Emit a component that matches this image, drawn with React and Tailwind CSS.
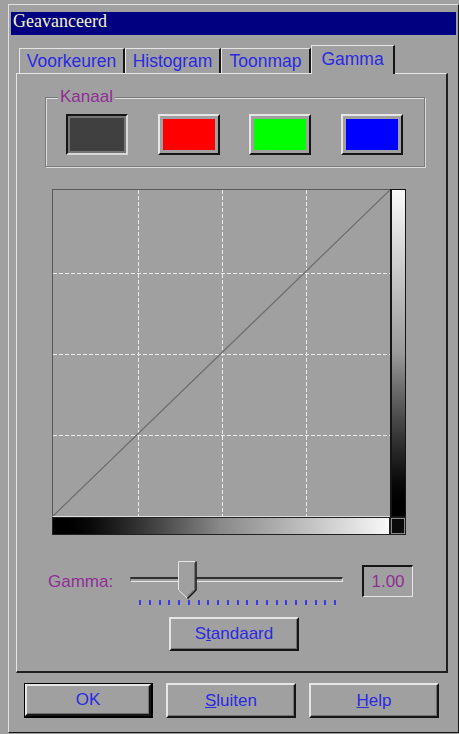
import React from "react";

const TXT_BLUE = "text-[#2a2ae0]";
const TXT_PURPLE = "text-[#8e2f96]";

function RaisedButton({ children, className = "" }) {
  return (
    <div
      className={`flex items-center justify-center border-t-2 border-l-2 border-t-[#e6e6e6] border-l-[#e6e6e6] border-r-2 border-b-2 border-r-[#151515] border-b-[#151515] shadow-[inset_-1px_-1px_0_#707070] ${className}`}
    >
      {children}
    </div>
  );
}

function Tab({ label, width, selected }) {
  if (selected) {
    return (
      <div
        className={`relative z-10 -mb-[1px] h-[29px] ${width} bg-[#a0a0a0] border-l border-t border-[#e6e6e6] border-r-2 border-r-[#151515] flex justify-center ${TXT_BLUE} text-[17.5px] leading-[20px] pt-[3px]`}
      >
        {label}
      </div>
    );
  }
  return (
    <div
      className={`h-[25px] ${width} border-l border-t border-[#e6e6e6] border-r-2 border-r-[#151515] flex justify-center ${TXT_BLUE} text-[17.5px] leading-[20px] pt-[2px]`}
    >
      {label}
    </div>
  );
}

function ColorSwatch({ color, pressed }) {
  if (pressed) {
    return (
      <div className="w-[62px] h-[41px] border-t-2 border-l-2 border-t-[#151515] border-l-[#151515] border-r-2 border-b-2 border-r-[#d8d8d8] border-b-[#d8d8d8] p-[2px] bg-[#767676]">
        <div className="w-full h-full bg-[#404040]" />
      </div>
    );
  }
  return (
    <div className="w-[62px] h-[41px] border-t-2 border-l-2 border-t-[#e6e6e6] border-l-[#e6e6e6] border-r-2 border-b-2 border-r-[#151515] border-b-[#151515] p-[3px] bg-[#a0a0a0]">
      <div className={`w-full h-full ${color}`} />
    </div>
  );
}

function Graph() {
  const vx = [85, 169, 253];
  const hy = [83, 164, 245];
  return (
    <svg width="337" height="326" viewBox="0 0 337 326" className="block">
      {vx.map((x) => (
        <line key={"v" + x} x1={x + 0.5} y1="0" x2={x + 0.5} y2="326" stroke="#ececec" strokeWidth="1" strokeDasharray="4 2" />
      ))}
      {hy.map((y) => (
        <line key={"h" + y} x1="0" y1={y + 0.5} x2="337" y2={y + 0.5} stroke="#ececec" strokeWidth="1" strokeDasharray="4 2" />
      ))}
      <line x1="0" y1="326" x2="337" y2="0" stroke="#6c6c6c" strokeWidth="1.2" />
    </svg>
  );
}

function Thumb() {
  return (
    <svg width="19" height="38" viewBox="0 0 19 38" className="block">
      <polygon points="0.5,0.5 18,0.5 18,29 9.5,37 0.5,29" fill="#a0a0a0" />
      <polyline points="0.5,29 0.5,0.5 17.5,0.5" fill="none" stroke="#e6e6e6" strokeWidth="1" />
      <polyline points="18,0.5 18,29 9.5,37.5" fill="none" stroke="#151515" strokeWidth="1.5" />
      <polyline points="16.5,2 16.5,28.5 9.5,35" fill="none" stroke="#707070" strokeWidth="1" />
      <line x1="1" y1="29.5" x2="9" y2="37" stroke="#e6e6e6" strokeWidth="1" />
    </svg>
  );
}

export default function App() {
  const ticks = Array.from({ length: 21 }, (_, i) => i);
  return (
    <div className="w-[459px] h-[734px] bg-[#a0a0a0] pt-[4px] pl-[8px] overflow-hidden font-['Liberation_Sans',Arial,sans-serif]">
      <div className="w-[451px] h-[729px] border-l border-t border-[#e0e0e0] border-r border-b border-r-[#151515] border-b-[#151515] flex flex-col">
        {/* Title bar */}
        <div className="mt-[7px] ml-[2px] w-[445px] h-[23px] bg-[#000080] pl-[2px] text-[18px] leading-[18px] text-[#f6f6c8] font-['Liberation_Serif','Times_New_Roman',serif]">
          Geavanceerd
        </div>

        {/* Tabs */}
        <div className="mt-[10px] ml-[10px] h-[28px] flex items-end">
          <Tab label="Voorkeuren" width="w-[106px]" />
          <Tab label="Histogram" width="w-[96px]" />
          <Tab label="Toonmap" width="w-[90px]" />
          <Tab label="Gamma" width="w-[84px]" selected />
        </div>

        {/* Panel */}
        <div className="ml-[7px] w-[432px] h-[600px] border-l border-t border-[#e6e6e6] border-r-2 border-b-2 border-r-[#202020] border-b-[#202020] flex flex-col">
          {/* Kanaal group */}
          <div className="relative mt-[23px] ml-[28px] w-[380px] h-[70px] border border-[#7a7a7a] shadow-[inset_1px_1px_0_#dcdcdc,1px_1px_0_#dcdcdc]">
            <div className={`absolute left-[12px] -top-[11px] px-[2px] bg-[#a0a0a0] text-[17px] leading-[20px] ${TXT_PURPLE}`}>
              Kanaal
            </div>
            <div className="pt-[16px] pl-[20px] pr-[21px] flex justify-between">
              <ColorSwatch pressed />
              <ColorSwatch color="bg-[#ff0000]" />
              <ColorSwatch color="bg-[#00ff00]" />
              <ColorSwatch color="bg-[#0000ff]" />
            </div>
          </div>

          {/* Graph block */}
          <div className="mt-[22px] ml-[35px] grid grid-cols-[338px_16px] grid-rows-[328px_18px]">
            <div className="border-t border-l border-[#5a5a5a] border-b border-b-[#dcdcdc]">
              <Graph />
            </div>
            <div className="border border-[#151515] border-l-2 bg-gradient-to-b from-[#fafafa] via-[#9a9a9a] to-[#000000]" />
            <div className="border border-[#202020] bg-gradient-to-r from-[#000000] via-[#8a8a8a] to-[#f8f8f8]" />
            <div className="border border-[#202020] p-[1px] bg-[#8a8a8a]">
              <div className="w-full h-full bg-[#0a0a0a]" />
            </div>
          </div>

          {/* Gamma row */}
          <div className="mt-[26px] ml-[31px] flex items-start">
            <div className={`w-[82px] mt-[11px] text-[17px] leading-[20px] ${TXT_PURPLE}`}>Gamma:</div>
            <div className="w-[213px] flex flex-col">
              <div className="relative h-[38px]">
                <div className="absolute left-0 right-0 top-[16px] h-[5px] border-t-2 border-t-[#303030] border-l border-l-[#707070] border-b border-b-[#e6e6e6] border-r border-r-[#e6e6e6]" />
                <div className="absolute left-[48px] top-0">
                  <Thumb />
                </div>
              </div>
              <div className="mt-[1px] pl-[9px] w-[206px] h-[5px] flex justify-between">
                {ticks.map((t) => (
                  <div key={t} className="w-[2px] h-[5px] bg-[#3a3ae8]" />
                ))}
              </div>
            </div>
            <div className={`ml-[19px] mt-[4px] w-[51px] h-[32px] border-t-2 border-l-2 border-t-[#151515] border-l-[#151515] border-r border-b border-r-[#e6e6e6] border-b-[#e6e6e6] flex items-center justify-center text-[17px] leading-[20px] ${TXT_PURPLE}`}>
              1.00
            </div>
          </div>

          {/* Standaard */}
          <RaisedButton className={`mt-[12px] ml-[152px] w-[130px] h-[34px] text-[17px] ${TXT_BLUE}`}>
            <span>
              S<span className="underline">t</span>andaard
            </span>
          </RaisedButton>
        </div>

        {/* Bottom buttons */}
        <div className="mt-[10px] ml-[15px] flex gap-[13px]">
          <div className="w-[129px] h-[35px] border border-[#000] border-r-2 border-b-2">
            <RaisedButton className={`w-full h-full text-[17px] ${TXT_BLUE}`}>OK</RaisedButton>
          </div>
          <RaisedButton className={`w-[130px] h-[35px] text-[17px] ${TXT_BLUE}`}>
            <span>
              <span className="underline">S</span>luiten
            </span>
          </RaisedButton>
          <RaisedButton className={`w-[130px] h-[35px] text-[17px] ${TXT_BLUE}`}>
            <span>
              <span className="underline">H</span>elp
            </span>
          </RaisedButton>
        </div>
      </div>
    </div>
  );
}
